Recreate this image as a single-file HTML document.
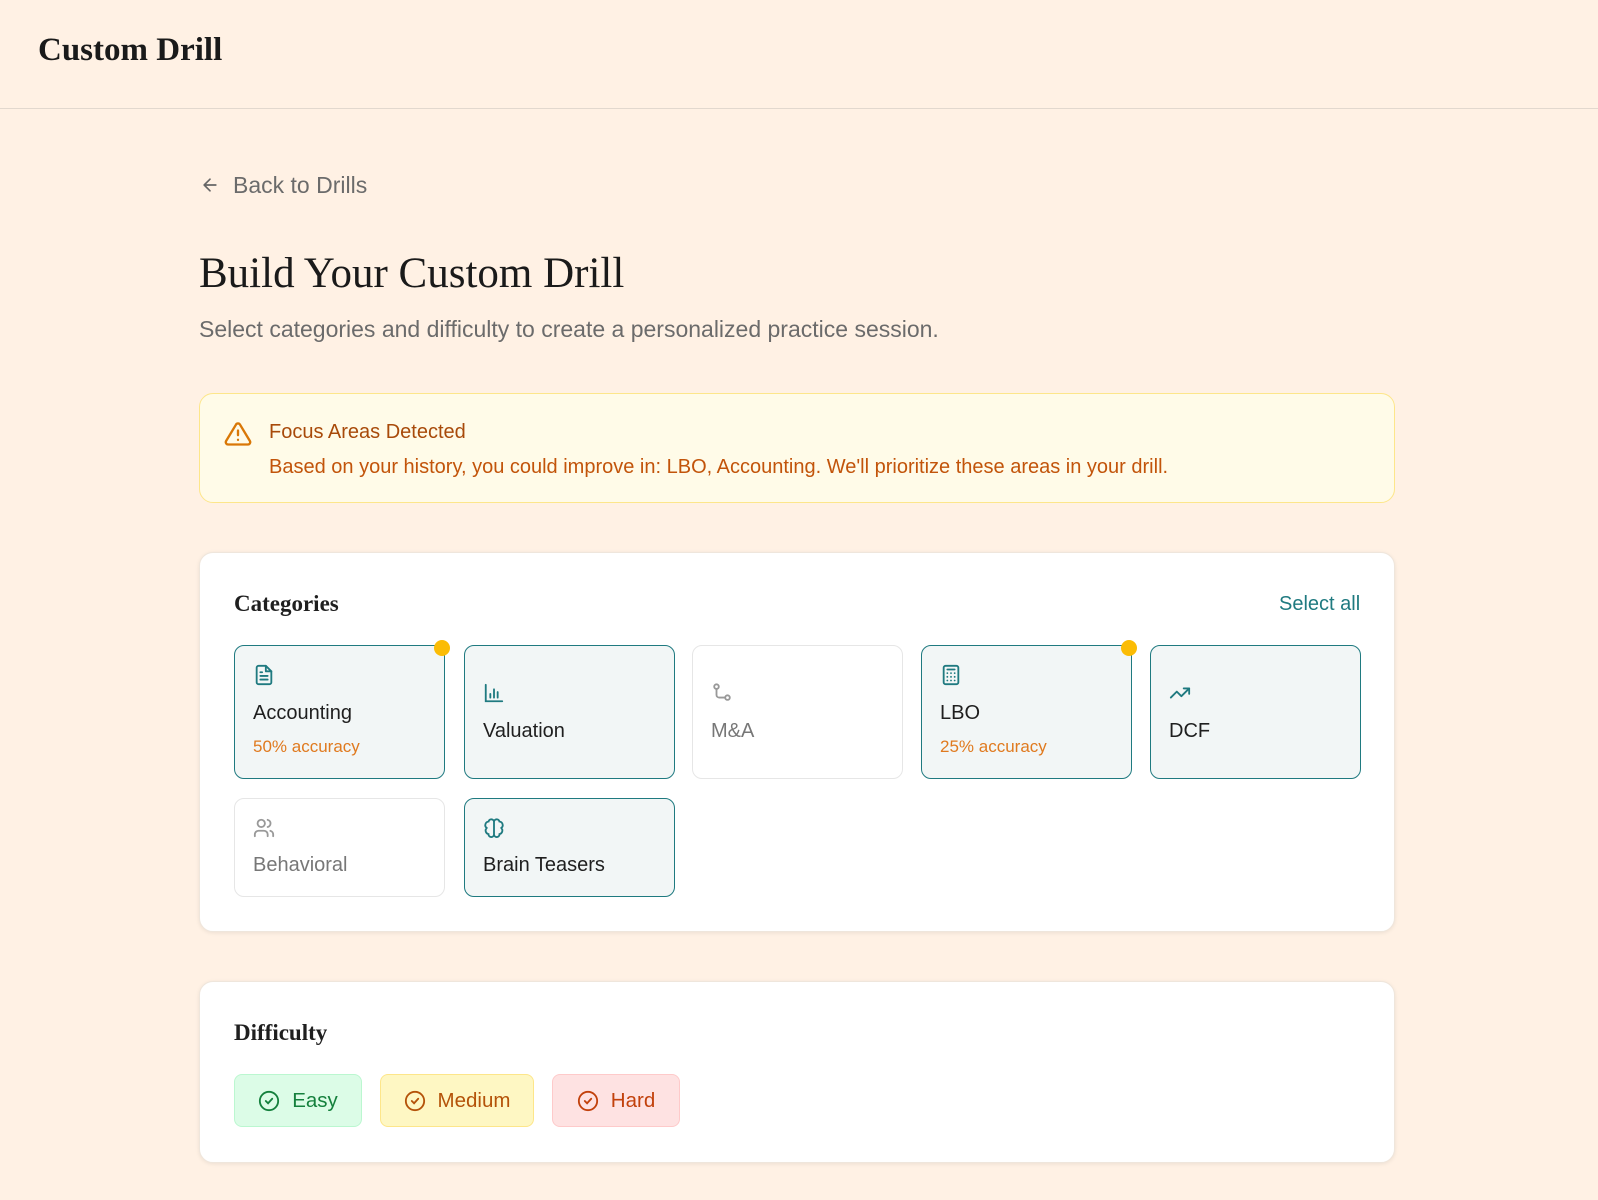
<!DOCTYPE html>
<html><head><meta charset="utf-8"><style>
*{box-sizing:border-box;margin:0;padding:0}
body{width:1598px;height:1200px;background:#fff1e4;font-family:"Liberation Sans",sans-serif;position:relative;overflow:hidden;color:#1f1f1f}
.a{position:absolute;white-space:nowrap}
.serif{font-family:"Liberation Serif",serif}
.card{position:absolute;background:#fff;border-radius:14px;box-shadow:0 1px 4px rgba(0,0,0,.08);border:1px solid #efe6dc}
.tile{position:absolute;width:211px;border-radius:10px;border:1.5px solid #1f7a80;background:#f2f6f6}
.tile.off{border:1.5px solid #e6e6e6;background:#fff}
.tile svg{position:absolute;left:18px}
.tile .n{position:absolute;left:18px;font-size:20px;line-height:24px;color:#1f1f1f}
.tile.off .n{color:#777}
.tile .acc{position:absolute;left:18px;font-size:17px;line-height:20px;color:#e07a1f}
.dot{position:absolute;right:-6px;top:-6px;width:16px;height:16px;border-radius:50%;background:#fbbc05}
.btn{position:absolute;top:1074px;height:53px;border-radius:8px;font-size:20.5px;display:flex;align-items:center;justify-content:center;gap:12px}
</style></head><body>
<div class="a serif" style="left:38px;top:30px;font-size:33px;line-height:40px;font-weight:bold;color:#1a1a1a">Custom Drill</div>
<div class="a" style="left:0;top:108px;width:1598px;height:1px;background:#e2d8ce"></div>

<svg class="a" style="left:200px;top:175px" width="20" height="20" viewBox="0 0 24 24" fill="none" stroke="#666" stroke-width="2" stroke-linecap="round" stroke-linejoin="round"><path d="M19 12H5M12 19l-7-7 7-7"/></svg>
<div class="a" style="left:233px;top:171px;font-size:23px;line-height:28px;color:#6b6b6b">Back to Drills</div>

<div class="a serif" style="left:199px;top:249px;font-size:43px;line-height:50px;color:#1a1a1a">Build Your Custom Drill</div>
<div class="a" style="left:199px;top:315px;font-size:23px;line-height:28px;color:#6b6b6b">Select categories and difficulty to create a personalized practice session.</div>

<div class="a" style="left:199px;top:393px;width:1196px;height:110px;background:#fffbe8;border:1px solid #fde68a;border-radius:14px"></div>
<svg class="a" style="left:224px;top:420px" width="28" height="28" viewBox="0 0 24 24" fill="none" stroke="#d97706" stroke-width="2" stroke-linecap="round" stroke-linejoin="round"><path d="M10.3 3.9L1.8 18a2 2 0 0 0 1.7 3h17a2 2 0 0 0 1.7-3L13.7 3.9a2 2 0 0 0-3.4 0z"/><path d="M12 9v4M12 17h.01"/></svg>
<div class="a" style="left:269px;top:420px;font-size:20px;line-height:24px;color:#a84a0a">Focus Areas Detected</div>
<div class="a" style="left:269px;top:455px;font-size:20px;line-height:24px;color:#c2540a">Based on your history, you could improve in: LBO, Accounting. We'll prioritize these areas in your drill.</div>

<div class="card" style="left:199px;top:552px;width:1196px;height:380px"></div>
<div class="a serif" style="left:234px;top:590px;font-size:23px;line-height:28px;font-weight:bold">Categories</div>
<div class="a" style="left:1279px;top:592px;font-size:20px;line-height:24px;color:#1f7a80">Select all</div>

<div class="tile" style="left:234px;top:645px;height:134px"><div class="dot"></div>
<svg style="top:18px" width="22" height="22" viewBox="0 0 24 24" fill="none" stroke="#1f7a80" stroke-width="2" stroke-linecap="round" stroke-linejoin="round"><path d="M14 2H6a2 2 0 0 0-2 2v16a2 2 0 0 0 2 2h12a2 2 0 0 0 2-2V8z"/><path d="M14 2v6h6M16 13H8M16 17H8M10 9H8"/></svg>
<div class="n" style="top:55px">Accounting</div><div class="acc" style="top:91px">50% accuracy</div></div>

<div class="tile" style="left:464px;top:645px;height:134px">
<svg style="top:36px" width="22" height="22" viewBox="0 0 24 24" fill="none" stroke="#1f7a80" stroke-width="2" stroke-linecap="round"><path d="M3 3v18h18M8 17v-4M12 17V8M16 17v-6"/></svg>
<div class="n" style="top:73px">Valuation</div></div>

<div class="tile off" style="left:692px;top:645px;height:134px">
<svg style="top:36px" width="22" height="22" viewBox="0 0 24 24" fill="none" stroke="#999" stroke-width="2" stroke-linecap="round"><circle cx="6" cy="5" r="2.5"/><circle cx="18" cy="17" r="2.5"/><path d="M6 8v6a3 3 0 0 0 3 3h6"/></svg>
<div class="n" style="top:73px">M&amp;A</div></div>

<div class="tile" style="left:921px;top:645px;height:134px"><div class="dot"></div>
<svg style="top:18px" width="22" height="22" viewBox="0 0 24 24" fill="none" stroke="#1f7a80" stroke-width="2" stroke-linecap="round"><rect x="4" y="2" width="16" height="20" rx="2"/><path d="M8 6h8M8 10h.01M12 10h.01M16 10h.01M8 14h.01M12 14h.01M16 14h.01M8 18h.01M12 18h.01M16 18h.01"/></svg>
<div class="n" style="top:55px">LBO</div><div class="acc" style="top:91px">25% accuracy</div></div>

<div class="tile" style="left:1150px;top:645px;height:134px">
<svg style="top:36px" width="22" height="22" viewBox="0 0 24 24" fill="none" stroke="#1f7a80" stroke-width="2" stroke-linecap="round" stroke-linejoin="round"><path d="M22 7l-8.5 8.5-5-5L2 17"/><path d="M16 7h6v6"/></svg>
<div class="n" style="top:73px">DCF</div></div>

<div class="tile off" style="left:234px;top:798px;height:99px">
<svg style="top:18px" width="22" height="22" viewBox="0 0 24 24" fill="none" stroke="#999" stroke-width="2" stroke-linecap="round"><circle cx="9" cy="7" r="4"/><path d="M2 21v-2a4 4 0 0 1 4-4h6a4 4 0 0 1 4 4v2M16 3.1a4 4 0 0 1 0 7.8M22 21v-2a4 4 0 0 0-3-3.9"/></svg>
<div class="n" style="top:54px">Behavioral</div></div>

<div class="tile" style="left:464px;top:798px;height:99px">
<svg style="top:18px" width="22" height="22" viewBox="0 0 24 24" fill="none" stroke="#1f7a80" stroke-width="2" stroke-linecap="round"><path d="M12 5a3 3 0 0 0-5.9-.1A4 4 0 0 0 4 12a4 4 0 0 0 2 6.7A3 3 0 0 0 12 19zM12 5a3 3 0 0 1 5.9-.1A4 4 0 0 1 20 12a4 4 0 0 1-2 6.7A3 3 0 0 1 12 19zM12 5v14"/></svg>
<div class="n" style="top:54px">Brain Teasers</div></div>

<div class="card" style="left:199px;top:981px;width:1196px;height:182px"></div>
<div class="a serif" style="left:234px;top:1019px;font-size:23px;line-height:28px;font-weight:bold">Difficulty</div>
<div class="btn" style="left:234px;width:128px;background:#dcfce7;border:1px solid #bbf7d0;color:#15803d"><svg width="22" height="22" viewBox="0 0 24 24" fill="none" stroke="#15803d" stroke-width="2" stroke-linecap="round"><circle cx="12" cy="12" r="10"/><path d="M8.5 12l2.5 2.5 4.5-5"/></svg>Easy</div>
<div class="btn" style="left:380px;width:154px;background:#fef7c3;border:1px solid #fde68a;color:#b45309"><svg width="22" height="22" viewBox="0 0 24 24" fill="none" stroke="#b45309" stroke-width="2" stroke-linecap="round"><circle cx="12" cy="12" r="10"/><path d="M8.5 12l2.5 2.5 4.5-5"/></svg>Medium</div>
<div class="btn" style="left:552px;width:128px;background:#fee2e2;border:1px solid #fecaca;color:#c2410c"><svg width="22" height="22" viewBox="0 0 24 24" fill="none" stroke="#c2410c" stroke-width="2" stroke-linecap="round"><circle cx="12" cy="12" r="10"/><path d="M8.5 12l2.5 2.5 4.5-5"/></svg>Hard</div>
</body></html>
